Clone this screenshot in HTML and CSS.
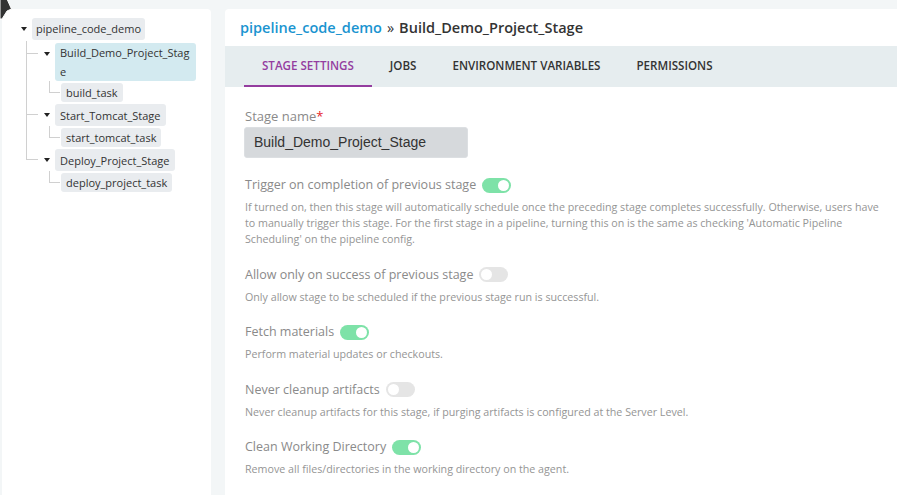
FILE: index.html
```html
<!DOCTYPE html>
<html>
<head>
<meta charset="utf-8">
<link rel="stylesheet" href="styles.css">
</head>
<body>
<svg class="cursor" width="14" height="22" viewBox="0 0 14 22"><polygon points="0,0 7,0 11.5,10 7,12 2,20 0,20" fill="#333" stroke="#fff" stroke-width="1"/></svg>
<div class="layout">
  <aside class="side">
    <div class="tree">
      <div class="row"><span class="caret"></span><span class="node root-node">pipeline_code_demo</span></div>
      <ul class="stages">
        <li class="stage">
          <div class="row"><span class="caret"></span><span class="node stage-node selected">Build_Demo_Project_Stage</span></div>
          <ul class="tasks"><li class="task"><span class="node task-node">build_task</span></li></ul>
        </li>
        <li class="stage">
          <div class="row"><span class="caret"></span><span class="node stage-node">Start_Tomcat_Stage</span></div>
          <ul class="tasks"><li class="task"><span class="node task-node">start_tomcat_task</span></li></ul>
        </li>
        <li class="stage last">
          <div class="row"><span class="caret"></span><span class="node stage-node">Deploy_Project_Stage</span></div>
          <ul class="tasks"><li class="task"><span class="node task-node">deploy_project_task</span></li></ul>
        </li>
      </ul>
    </div>
  </aside>
  <main class="main">
    <h1 class="title"><a class="crumb">pipeline_code_demo</a><span class="sep">»</span><span class="current">Build_Demo_Project_Stage</span></h1>
    <nav class="tabs">
      <span class="tab active">STAGE SETTINGS</span>
      <span class="tab">JOBS</span>
      <span class="tab">ENVIRONMENT VARIABLES</span>
      <span class="tab">PERMISSIONS</span>
    </nav>
    <section class="content">
      <div class="field">
        <label class="label">Stage name<span class="req">*</span></label>
        <div class="input">Build_Demo_Project_Stage</div>
      </div>
      <div class="setting">
        <div class="label-row"><span class="label">Trigger on completion of previous stage</span><span class="switch on"></span></div>
        <p class="help">If turned on, then this stage will automatically schedule once the preceding stage completes successfully. Otherwise, users have to manually trigger this stage. For the first stage in a pipeline, turning this on is the same as checking 'Automatic Pipeline Scheduling' on the pipeline config.</p>
      </div>
      <div class="setting">
        <div class="label-row"><span class="label">Allow only on success of previous stage</span><span class="switch"></span></div>
        <p class="help">Only allow stage to be scheduled if the previous stage run is successful.</p>
      </div>
      <div class="setting">
        <div class="label-row"><span class="label">Fetch materials</span><span class="switch on"></span></div>
        <p class="help">Perform material updates or checkouts.</p>
      </div>
      <div class="setting">
        <div class="label-row"><span class="label">Never cleanup artifacts</span><span class="switch"></span></div>
        <p class="help">Never cleanup artifacts for this stage, if purging artifacts is configured at the Server Level.</p>
      </div>
      <div class="setting">
        <div class="label-row"><span class="label">Clean Working Directory</span><span class="switch on"></span></div>
        <p class="help">Remove all files/directories in the working directory on the agent.</p>
      </div>
    </section>
  </main>
</div>
</body>
</html>
```
FILE: styles.css
```css
* { box-sizing: border-box; }
html, body { margin: 0; padding: 0; }
body {
  background: #f3f6f7;
  font-family: "Open Sans", "Noto Sans", sans-serif;
  color: #333;
  height: 495px;
  overflow: hidden;
}
.cursor { position: absolute; left: 0; top: -1px; z-index: 5; }
.layout {
  display: flex;
  padding: 9px 0 0 2px;
  gap: 14px;
  height: 100%;
}
.side {
  width: 209px;
  background: #fff;
  border-radius: 0 4px 0 0;
  padding: 9px 0 0 19px;
}
.tree ul { list-style: none; margin: 0; padding: 0; }
.row { display: flex; align-items: flex-start; }
.caret {
  width: 0; height: 0;
  border-left: 3.5px solid transparent;
  border-right: 3.5px solid transparent;
  border-top: 4px solid #222;
  margin-top: 9px;
  margin-right: 5px;
  flex: none;
}
.node {
  background: #e9ecef;
  border-radius: 3px;
  font-size: 11px;
  color: #333;
}
.root-node { height: 22px; line-height: 22px; padding: 0 4px; }
.stage {
  position: relative;
  padding-left: 23px;
  margin-top: 2px;
}
.stage:first-child { margin-top: 3px; }
.stage::before {
  content: "";
  position: absolute;
  left: 5px; top: -2px;
  width: 11px; height: 12px;
  border-left: 1px solid #d0d0d0;
  border-bottom: 1px solid #d0d0d0;
}
.stage::after {
  content: "";
  position: absolute;
  left: 5px; top: 10px; bottom: 0;
  border-left: 1px solid #d0d0d0;
}
.stage.last::after { display: none; }
.stage-node {
  display: inline-flex;
  align-items: center;
  min-height: 22px;
  line-height: 19px;
  padding: 0 5px;
  width: max-content;
  max-width: 141px;
  word-break: break-all;
}
.selected { background: #d3eaf0; }
.tree .tasks { padding-left: 17px; }
.task { position: relative; margin-top: 2px; display: flex; }
.task::before {
  content: "";
  position: absolute;
  left: -12px; top: -2px;
  width: 10px; height: 11px;
  border-left: 1px solid #d0d0d0;
  border-bottom: 1px solid #d0d0d0;
}
.task-node { display: block; height: 19px; line-height: 19px; padding: 0 5px; }

.main {
  flex: 1;
  background: #fff;
  border-radius: 4px 0 0 0;
  min-width: 0;
}
.title {
  margin: 0;
  height: 37px;
  display: flex;
  align-items: center;
  padding: 0 15px;
  font-size: 14.5px;
  font-weight: 600;
}
.crumb { color: #1a94d0; }
.sep { color: #333; margin: 0 5px; font-weight: 400; }
.current { color: #333; }
.tabs {
  height: 41px;
  background: #e6edef;
  display: flex;
  padding-left: 19px;
}
.tab {
  padding: 0 18px;
  font-size: 11.6px;
  font-weight: 600;
  color: #333;
  line-height: 39px;
  border-bottom: 2px solid transparent;
}
.tab.active { color: #943d9f; border-bottom-color: #943d9f; }
.content { padding: 19px 8px 0 20px; }
.label { font-size: 12.5px; color: #8a8a8a; line-height: 20px; }
.req { color: #e5252a; }
.field .label { display: block; font-size: 13px; }
.input {
  margin-top: 1px;
  width: 224px;
  height: 31px;
  background: #d6d9dc;
  border: 1px solid #dcdfe2;
  border-radius: 3px;
  margin-left: -1px;
  padding-left: 9px;
  font-family: "Liberation Sans", Arial, sans-serif;
  font-size: 14px;
  line-height: 29px;
  color: #333;
}
.setting { margin-top: 17.6px; }
.field + .setting { margin-top: 17px; }
.label-row { display: flex; align-items: center; gap: 6px; }
.switch {
  position: relative;
  width: 29px; height: 15px;
  border-radius: 8px;
  background: #e5e5e5;
}
.switch::after {
  content: "";
  position: absolute;
  left: 2px; top: 2px;
  width: 11px; height: 11px;
  border-radius: 50%;
  background: #fff;
}
.switch.on { background: #7ee2a8; }
.switch.on::after { left: 16px; }
.help {
  margin: 4px 0 0 0;
  font-size: 10.7px;
  line-height: 16px;
  color: #959595;
}
```
